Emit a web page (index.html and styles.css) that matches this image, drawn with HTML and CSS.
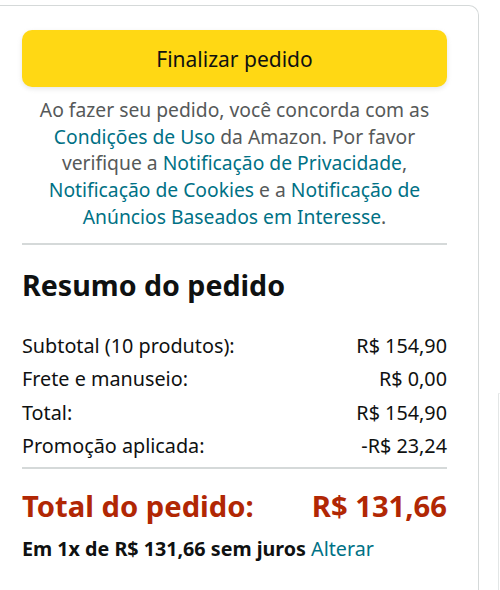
FILE: index.html
```html
<!DOCTYPE html>
<html lang="pt-BR">
<head>
<meta charset="utf-8">
<link rel="stylesheet" href="styles.css">
</head>
<body>
<div class="page">
  <div class="card">
    <button class="checkout">Finalizar pedido</button>
    <p class="terms">Ao fazer seu pedido, você concorda com as <a>Condições de Uso</a> da Amazon. Por favor verifique a <a>Notificação de Privacidade</a>, <a>Notificação de Cookies</a> e a <a>Notificação de Anúncios Baseados em Interesse</a>.</p>
    <hr class="sep">
    <h2 class="title">Resumo do pedido</h2>
    <div class="rows">
      <div class="row"><span>Subtotal (10 produtos):</span><span>R$ 154,90</span></div>
      <div class="row"><span>Frete e manuseio:</span><span>R$ 0,00</span></div>
      <div class="row"><span>Total:</span><span>R$ 154,90</span></div>
      <div class="row"><span>Promoção aplicada:</span><span>-R$ 23,24</span></div>
    </div>
    <hr class="sep sep2">
    <div class="grand"><span>Total do pedido:</span><span>R$ 131,66</span></div>
    <p class="install"><b>Em 1x de R$ 131,66 sem juros</b> <a>Alterar</a></p>
  </div>
  <div class="neighbor"></div>
</div>
</body>
</html>
```
FILE: styles.css
```css
html, body {
  margin: 0;
  padding: 0;
  background: #fff;
  overflow: hidden;
}
body {
  font-family: "Noto Sans", "Open Sans", sans-serif;
  color: #0f1111;
  width: 500px;
  height: 590px;
}
.page {
  display: flex;
  gap: 19px;
  padding-top: 5px;
  margin-left: -10px;
}
.card {
  box-sizing: border-box;
  flex: 0 0 489px;
  height: 585px;
  border: 1px solid #d5d9d9;
  border-bottom: none;
  border-radius: 10px 10px 0 0;
  padding: 24px 31px 0;
}
.neighbor {
  flex: 0 0 20px;
  margin-top: 388px;
  height: 197px;
  border-left: 1px solid #e3e6e6;
  border-top: 1px solid #eef0f0;
}
.checkout {
  display: block;
  width: 100%;
  height: 57px;
  border: none;
  border-radius: 10px;
  background: #ffd814;
  box-shadow: 0 2px 5px rgba(213, 217, 217, 0.6);
  font-family: inherit;
  font-size: 21px;
  color: #0f1111;
  padding: 0;
}
.terms {
  margin: 10px 0 0;
  text-align: center;
  font-size: 19.3px;
  line-height: 26.7px;
  color: #565959;
}
.terms a, .install a {
  color: #007185;
}
.sep {
  border: 0;
  border-top: 2px solid #d5d9d9;
  margin: 12px 0 0;
}
.title {
  margin: 22px 0 0;
  font-size: 28.6px;
  line-height: 36px;
  font-weight: 700;
}
.rows {
  margin-top: 29px;
  display: flex;
  flex-direction: column;
  gap: 6.5px;
}
.row {
  display: flex;
  justify-content: space-between;
  font-size: 19.8px;
  line-height: 27px;
}
.sep2 {
  margin-top: 8px;
}
.grand {
  display: flex;
  justify-content: space-between;
  margin-top: 19px;
  font-size: 29.2px;
  line-height: 36px;
  font-weight: 700;
  color: #b12704;
}
.install {
  margin: 11px 0 0;
  font-size: 19.7px;
  line-height: 27px;
}
```
